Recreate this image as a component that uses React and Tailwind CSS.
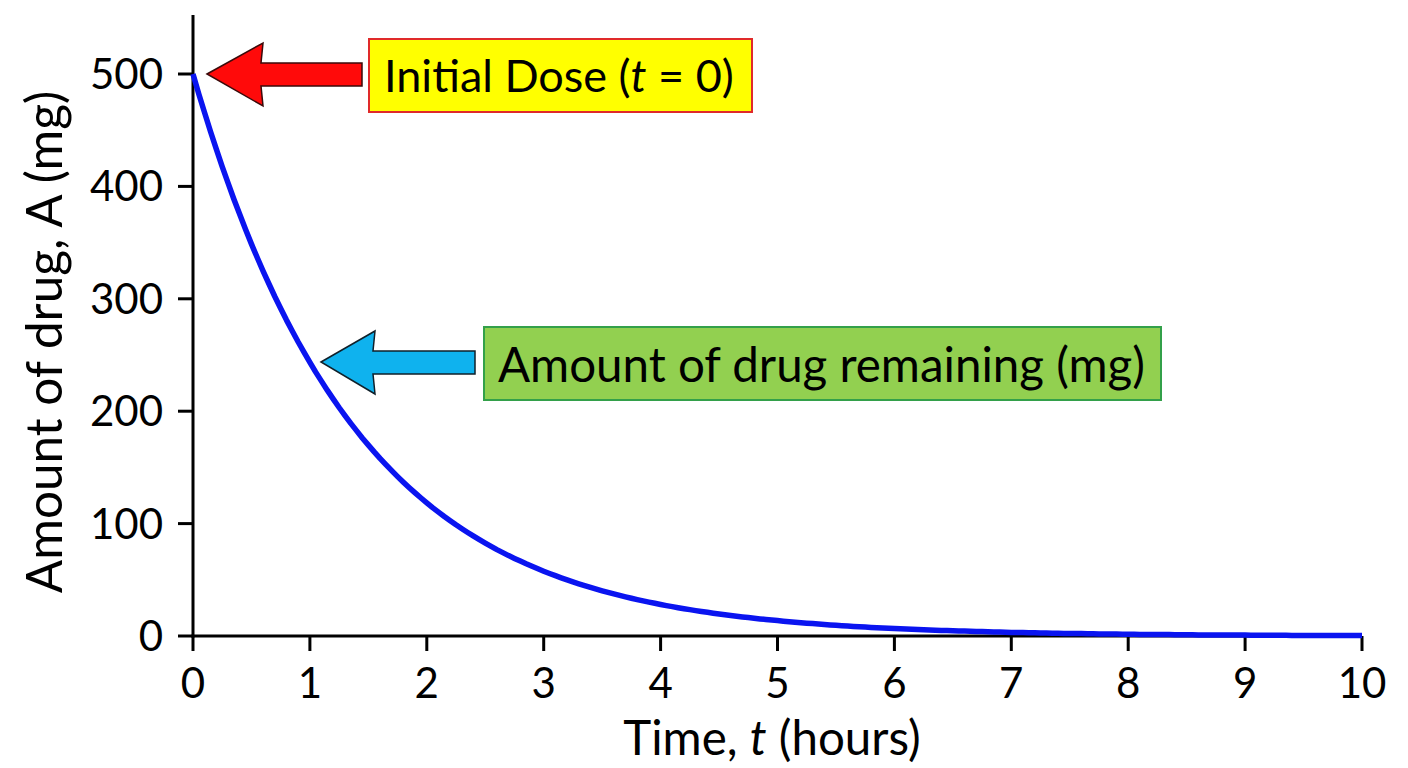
const X0 = 193;
const Y0 = 636;
const XS = 116.9;
const YS = 1.124;
const K = 0.72;

const xAt = (t) => X0 + t * XS;
const yAt = (a) => Y0 - a * YS;

function curvePath() {
  const pts = [];
  for (let i = 0; i <= 200; i++) {
    const t = i * 0.05;
    const a = 500 * Math.exp(-K * t);
    pts.push(`${i === 0 ? 'M' : 'L'}${xAt(t).toFixed(1)},${yAt(a).toFixed(1)}`);
  }
  return pts.join(' ');
}

function Chart() {
  const xticks = [0, 1, 2, 3, 4, 5, 6, 7, 8, 9, 10];
  const yticks = [0, 100, 200, 300, 400, 500];
  return (
    <svg width="1408" height="768" className="absolute inset-0" style={{ fontFamily: 'Lato, "Noto Sans", sans-serif' }}>
      {/* axes */}
      <line x1={X0} y1={15} x2={X0} y2={Y0 + 1.5} stroke="#000" strokeWidth="3" />
      <line x1={X0 - 1.5} y1={Y0} x2={1362} y2={Y0} stroke="#000" strokeWidth="3" />
      {xticks.map((t) => (
        <g key={t}>
          <line x1={xAt(t)} y1={Y0} x2={xAt(t)} y2={Y0 + 15} stroke="#000" strokeWidth="3" />
          <text x={xAt(t)} y={698} textAnchor="middle" fontSize="42" fill="#000">
            {t}
          </text>
        </g>
      ))}
      {yticks.map((v) => (
        <g key={v}>
          <line x1={X0 - 15} y1={yAt(v)} x2={X0} y2={yAt(v)} stroke="#000" strokeWidth="3" />
          <text x={163} y={yAt(v) + 15} textAnchor="end" fontSize="42" fill="#000">
            {v}
          </text>
        </g>
      ))}

      {/* axis titles */}
      <text x={772} y={755} textAnchor="middle" fontSize="47.5" fill="#000">
        Time, <tspan fontStyle="italic">t</tspan> (hours)
      </text>
      <text transform="translate(62,342) rotate(-90)" textAnchor="middle" fontSize="49.5" fill="#000">
        Amount of drug, A (mg)
      </text>

      {/* decay curve */}
      <path d={curvePath()} fill="none" stroke="#0a14f0" strokeWidth="5.5" strokeLinejoin="round" />

      {/* arrows */}
      <polygon
        points="207,74 263,43 261,63 362,63 362,86 261,86 263,106"
        fill="#ff0a0a"
        stroke="#3a0a0a"
        strokeWidth="1.5"
        strokeLinejoin="miter"
      />
      <polygon
        points="321,362 375,331 373,351 475,351 475,374 373,374 375,394"
        fill="#0fb2ee"
        stroke="#10202a"
        strokeWidth="1.5"
      />
    </svg>
  );
}

export default function App() {
  return (
    <div className="relative w-[1408px] h-[768px] bg-white overflow-hidden font-['Lato',_'Noto_Sans',_sans-serif] text-black">
      <Chart />
      <div className="absolute left-[368px] top-[38px] w-[385px] h-[75px] bg-[#ffff00] border-2 border-[#e02a2a] flex items-center pl-[14px]">
        <span className="text-[45px] leading-none">
          Initial Dose (<span className="italic">t</span> = 0)
        </span>
      </div>
      <div className="absolute left-[483px] top-[326px] w-[679px] h-[75px] bg-[#92d050] border-2 border-[#33a04a] flex items-center pl-[13px]">
        <span className="text-[47.5px] leading-none">Amount of drug remaining (mg)</span>
      </div>
    </div>
  );
}
